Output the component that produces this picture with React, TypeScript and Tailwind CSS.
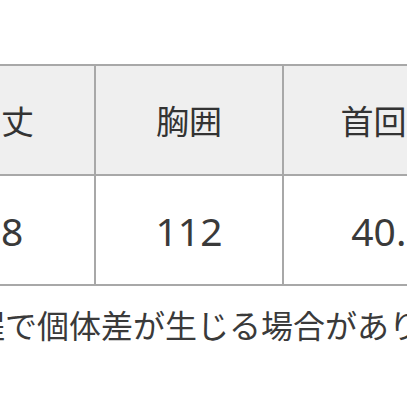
const headers = ["着丈", "胸囲", "首回り"]
const values = ["78", "112", "40.5"]

export default function App() {
  return (
    <div className="w-[407px] h-[407px] overflow-hidden bg-white text-[#333]">
      <div className="pt-[64px] ml-[-94px]">
        <table className="table-fixed w-[590px] border-collapse">
          <colgroup>
            <col className="w-[188px]" />
            <col className="w-[188px]" />
            <col className="w-[214px]" />
          </colgroup>
          <tbody>
            <tr className="bg-[#efefef]">
              {headers.map((h) => (
                <th
                  key={h}
                  className="h-[110px] border-2 border-[#a8a8a8] p-0 text-center align-middle text-[33px] font-normal leading-none whitespace-nowrap"
                  style={{ fontFamily: '"Noto Sans CJK JP", sans-serif' }}
                >
                  {h}
                </th>
              ))}
            </tr>
            <tr>
              {values.map((v) => (
                <td
                  key={v}
                  className="h-[110px] border-2 border-[#a8a8a8] p-0 text-center align-middle text-[39px] leading-none whitespace-nowrap text-[#3a3a3a]"
                  style={{ fontFamily: '"Noto Sans", sans-serif' }}
                >
                  {v}
                </td>
              ))}
            </tr>
          </tbody>
        </table>
      </div>
      <p
        className="mt-[22px] ml-[-123px] whitespace-nowrap text-[32px] leading-none text-[#3a3a3a]"
        style={{ fontFamily: '"Noto Sans CJK JP", sans-serif' }}
      >
        製造工程で個体差が生じる場合があります。
      </p>
    </div>
  )
}
